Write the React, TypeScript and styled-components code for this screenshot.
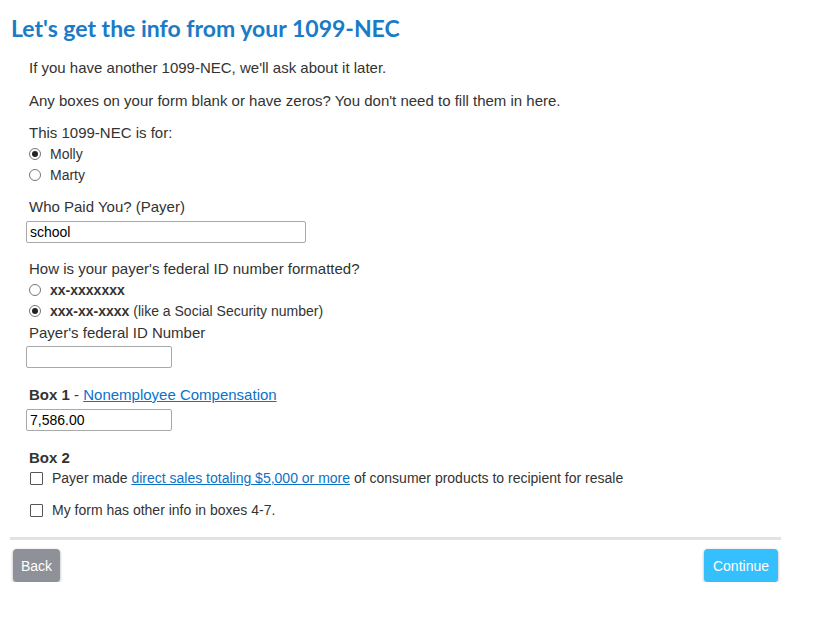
import React from "react";
import styled, { createGlobalStyle } from "styled-components";

const Global = createGlobalStyle`
  html, body { margin: 0; padding: 0; background: #fff; }
  body { font-family: "Liberation Sans", Arial, sans-serif; color: #333; }
  * { box-sizing: border-box; }
`;

const Page = styled.div`
  width: 816px;
  padding: 0 35px 0 10px;
`;

const Title = styled.h1`
  margin: 14px 0 0 1px;
  font-family: Lato, "Open Sans", sans-serif;
  font-weight: 700;
  font-size: 23px;
  line-height: 28px;
  color: #1a7bc6;
`;

const Content = styled.div`
  padding-left: 16px;
  display: flex;
  flex-direction: column;
`;

const Text = styled.div<{ $mt?: number }>`
  margin-top: ${(p) => p.$mt ?? 0}px;
  padding-left: 3px;
  font-size: 15px;
  line-height: 20px;
  color: #333;
`;

const Bold = styled.b`
  font-weight: 700;
`;

const Link = styled.a`
  color: #0b72c6;
  text-decoration: underline;
  cursor: pointer;
`;

const OptionRow = styled.label<{ $h?: number; $mt?: number }>`
  display: flex;
  align-items: center;
  height: ${(p) => p.$h ?? 21}px;
  margin-top: ${(p) => p.$mt ?? 0}px;
  padding-left: 3px;
  font-size: 14px;
  color: #333;
  cursor: pointer;
`;

const Radio = styled.span<{ $on?: boolean }>`
  position: relative;
  width: 12px;
  height: 12px;
  margin: 0 9px 0 0;
  border: 1px solid #767676;
  border-radius: 50%;
  background: #fff;
  flex: none;
  &::after {
    content: "";
    display: ${(p) => (p.$on ? "block" : "none")};
    position: absolute;
    left: 2px;
    top: 2px;
    width: 6px;
    height: 6px;
    border-radius: 50%;
    background: #222;
  }
`;

const Check = styled.span`
  width: 13px;
  height: 13px;
  margin: 0 9px 0 1px;
  border: 1px solid #555;
  border-radius: 1px;
  background: #fff;
  flex: none;
`;

const Input = styled.input<{ $w: number; $mt?: number }>`
  width: ${(p) => p.$w}px;
  height: 22px;
  margin-top: ${(p) => p.$mt ?? 0}px;
  padding: 0 3px;
  border: 1px solid #a9a9a9;
  border-radius: 2px;
  font-family: "Liberation Sans", Arial, sans-serif;
  font-size: 14px;
  color: #000;
  outline: none;
`;

const Rule = styled.hr`
  margin: 17px 0 0 0;
  width: 771px;
  height: 3px;
  border: none;
  background: #e2e2e2;
`;

const Footer = styled.div`
  display: flex;
  justify-content: space-between;
  width: 771px;
  margin-top: 9px;
  padding: 0 3px 0 3px;
`;

const Button = styled.button<{ $primary?: boolean }>`
  height: 33px;
  padding: 0 ${(p) => (p.$primary ? 9 : 8)}px;
  border: none;
  border-radius: 4px;
  background: ${(p) => (p.$primary ? "#35c0fd" : "#8e9198")};
  color: #fff;
  font-family: "Liberation Sans", Arial, sans-serif;
  font-size: 14px;
  box-shadow: 0 1px 3px rgba(0, 0, 0, 0.35);
  cursor: pointer;
`;

export default function App() {
  return (
    <>
      <Global />
      <Page>
        <Title>Let's get the info from your 1099-NEC</Title>
        <Content>
          <Text $mt={16}>If you have another 1099-NEC, we'll ask about it later.</Text>
          <Text $mt={13}>Any boxes on your form blank or have zeros? You don't need to fill them in here.</Text>
          <Text $mt={12}>This 1099-NEC is for:</Text>
          <OptionRow>
            <Radio $on />
            Molly
          </OptionRow>
          <OptionRow>
            <Radio />
            Marty
          </OptionRow>
          <Text $mt={12}>Who Paid You? (Payer)</Text>
          <Input $w={280} $mt={4} defaultValue="school" />
          <Text $mt={16}>How is your payer's federal ID number formatted?</Text>
          <OptionRow>
            <Radio />
            <Bold>xx-xxxxxxx</Bold>
          </OptionRow>
          <OptionRow>
            <Radio $on />
            <Bold>xxx-xx-xxxx</Bold>&nbsp;(like a Social Security number)
          </OptionRow>
          <Text $mt={2}>Payer's federal ID Number</Text>
          <Input $w={146} $mt={3} />
          <Text $mt={17}>
            <Bold>Box 1</Bold> - <Link>Nonemployee Compensation</Link>
          </Text>
          <Input $w={146} $mt={4} defaultValue="7,586.00" />
          <Text $mt={17}>
            <Bold>Box 2</Bold>
          </Text>
          <OptionRow $h={20}>
            <Check />
            Payer made&nbsp;<Link>direct sales totaling $5,000 or more</Link>&nbsp;of consumer products to recipient for resale
          </OptionRow>
          <OptionRow $h={20} $mt={12}>
            <Check />
            My form has other info in boxes 4-7.
          </OptionRow>
        </Content>
        <Rule />
        <Footer>
          <Button>Back</Button>
          <Button $primary>Continue</Button>
        </Footer>
      </Page>
    </>
  );
}
